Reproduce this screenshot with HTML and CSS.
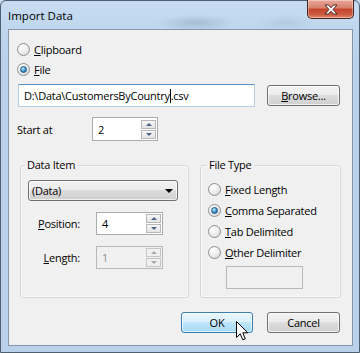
FILE: index.html
```html
<!DOCTYPE html>
<html>
<head>
<meta charset="utf-8">
<link rel="stylesheet" href="styles.css">
</head>
<body>
<div class="window">
  <div class="titlebar">
    <span class="title">Import Data</span>
    <div class="close">
      <svg width="14" height="11" viewBox="0 0 14 11"><path d="M1 1 H4.5 L7 3.8 L9.5 1 H13 L9 5.5 L13 10 H9.5 L7 7.2 L4.5 10 H1 L5 5.5 Z" fill="#fff" stroke="#4a2a24" stroke-width="1" stroke-linejoin="round"/></svg>
    </div>
  </div>
  <div class="client">
    <div class="radio-row"><span class="radio"></span><span class="lbl"><u>C</u>lipboard</span></div>
    <div class="radio-row"><span class="radio checked"></span><span class="lbl"><u>F</u>ile</span></div>
    <div class="file-row">
      <div class="textbox file-input">D:\Data\CustomersByCountry<span class="caret"></span>.csv</div>
      <div class="btn browse"><span><u>B</u>rowse...</span></div>
    </div>
    <div class="start-row">
      <span class="lbl start-lbl">Start at</span>
      <div class="spin start-spin">
        <span class="val">2</span>
        <div class="spin-btns"><span class="sb up"></span><span class="sb down"></span></div>
      </div>
    </div>
    <div class="groups">
      <fieldset class="group data-item">
        <legend>Data Item</legend>
        <div class="combo"><span>(Data)</span><span class="arrow"></span></div>
        <div class="field-row">
          <span class="flbl"><u>P</u>osition:</span>
          <div class="spin pos-spin">
            <span class="val">4</span>
            <div class="spin-btns"><span class="sb up"></span><span class="sb down"></span></div>
          </div>
        </div>
        <div class="field-row">
          <span class="flbl"><u>L</u>ength:</span>
          <div class="spin pos-spin disabled">
            <span class="val">1</span>
            <div class="spin-btns"><span class="sb up"></span><span class="sb down"></span></div>
          </div>
        </div>
      </fieldset>
      <fieldset class="group file-type">
        <legend>File Type</legend>
        <div class="radio-row ft"><span class="radio"></span><span class="lbl"><u>F</u>ixed Length</span></div>
        <div class="radio-row ft"><span class="radio checked"></span><span class="lbl"><u>C</u>omma Separated</span></div>
        <div class="radio-row ft"><span class="radio"></span><span class="lbl"><u>T</u>ab Delimited</span></div>
        <div class="radio-row ft"><span class="radio"></span><span class="lbl"><u>O</u>ther Delimiter</span></div>
        <div class="textbox delim"></div>
      </fieldset>
    </div>
    <div class="buttons">
      <div class="btn ok"><span>OK</span></div>
      <div class="btn cancel"><span>Cancel</span></div>
    </div>
  </div>
  <svg class="cursor" width="13" height="20" viewBox="0 0 13 20"><path d="M0.5 0.5 V16.5 L4.3 12.8 L6.8 18.8 L9.3 17.8 L6.8 11.8 H11.8 Z" fill="#fff" stroke="#000" stroke-width="1" stroke-linejoin="miter"/></svg>
</div>
</body>
</html>
```

FILE: styles.css
```css
html, body {
  margin: 0;
  padding: 0;
}
body {
  width: 360px;
  height: 353px;
  overflow: hidden;
  font-family: "Open Sans", "Noto Sans", "DejaVu Sans", sans-serif;
  font-size: 11px;
  letter-spacing: -0.25px;
  color: #000;
  background: #c8dcf0;
}
u { text-decoration: underline; text-underline-offset: 1px; }

.window {
  position: relative;
  width: 360px;
  height: 353px;
  box-sizing: border-box;
  border: 1px solid #4f5f70;
  border-radius: 6px 6px 0 0;
  background:
    radial-gradient(ellipse 40px 8px at 195px 22px, rgba(120,140,165,0.35), rgba(120,140,165,0) 100%),
    radial-gradient(ellipse 30px 8px at 285px 22px, rgba(140,160,185,0.25), rgba(140,160,185,0) 100%),
    linear-gradient(to bottom, #c7dcf1 0px, #bfd6ee 28px, #b9d1ea 60px, #b9d1ea 100%);
  display: flex;
  flex-direction: column;
}

.titlebar {
  height: 28px;
  display: flex;
  align-items: flex-start;
  justify-content: space-between;
}
.title {
  margin: 7px 0 0 7px;
  font-size: 11.5px;
  letter-spacing: 0;
  line-height: 16px;
  color: #000;
}
.close {
  width: 47px;
  height: 19px;
  margin: -1px 5px 0 0;
  box-sizing: border-box;
  border: 1px solid #4a2520;
  border-top: none;
  border-radius: 0 0 5px 5px;
  background: linear-gradient(to bottom, #e9a99b 0%, #d87f6c 45%, #c4432b 50%, #cc5a40 80%, #e08c70 100%);
  display: flex;
  align-items: center;
  justify-content: center;
  box-shadow: inset 0 0 0 1px rgba(255,255,255,0.35);
}

.client {
  margin-left: 7px;
  width: 345px;
  height: 317px;
  box-sizing: border-box;
  border: 1px solid #8696a7;
  background: #f0f0f0;
  padding: 9px 12px 0 8px;
  display: flex;
  flex-direction: column;
}

.radio-row {
  height: 20px;
  display: flex;
  align-items: center;
}
.radio {
  width: 13px;
  height: 13px;
  box-sizing: border-box;
  border-radius: 50%;
  border: 1px solid #8c8e90;
  background: radial-gradient(circle at 35% 30%, #ffffff 0%, #f2f2f2 40%, #d4d4d4 100%);
  margin-right: 4px;
  display: flex;
  align-items: center;
  justify-content: center;
  flex: none;
}
.radio.checked::after {
  content: "";
  width: 7px;
  height: 7px;
  box-sizing: border-box;
  border-radius: 50%;
  border: 1px solid #1f4f7e;
  background: radial-gradient(circle at 35% 30%, #c6f0ff 0%, #4ea6d8 45%, #195a93 100%);
}
.lbl {
  line-height: 15px;
}

.file-row {
  margin-top: 5px;
  height: 23px;
  display: flex;
  align-items: center;
}
.textbox {
  box-sizing: border-box;
  background: #fff;
  border: 1px solid #abadb3;
  border-color: #abadb3 #e2e3ea #e3e9ef #e2e3ea;
}
.file-input {
  margin-left: 1px;
  width: 237px;
  height: 23px;
  border-color: #5c93c7 #b5cfe7 #b5cfe7 #b5cfe7;
  padding-left: 5px;
  display: flex;
  align-items: center;
  white-space: pre;
}
.caret {
  display: inline-block;
  width: 1px;
  height: 14px;
  background: #000;
}

.btn {
  box-sizing: border-box;
  height: 21px;
  border: 1px solid #707070;
  border-radius: 3px;
  background: linear-gradient(to bottom, #f2f2f2 0%, #ebebeb 50%, #dddddd 50%, #cfcfcf 100%);
  box-shadow: inset 0 0 0 1px rgba(255,255,255,0.7);
  display: flex;
  align-items: center;
  justify-content: center;
  line-height: 15px;
}
.browse {
  width: 73px;
  margin-left: 12px;
}

.start-row {
  margin-top: 10px;
  height: 24px;
  display: flex;
  align-items: center;
}
.start-lbl {
  width: 75px;
}
.spin {
  box-sizing: border-box;
  height: 24px;
  border: 1px solid #acacac;
  background: #fff;
  display: flex;
  align-items: center;
  justify-content: space-between;
  padding: 0 1px 0 5px;
}
.start-spin {
  width: 66px;
}
.spin-btns {
  display: flex;
  flex-direction: column;
  gap: 1px;
}
.sb {
  width: 15px;
  height: 9px;
  box-sizing: border-box;
  border: 1px solid #b8b8b8;
  background: linear-gradient(to bottom, #f7f7f7, #e3e3e3);
  display: flex;
  align-items: center;
  justify-content: center;
}
.sb::after {
  content: "";
  width: 0;
  height: 0;
  border-left: 3px solid transparent;
  border-right: 3px solid transparent;
}
.sb.up::after { border-bottom: 3px solid #4c6385; }
.sb.down::after { border-top: 3px solid #4c6385; }

.groups {
  margin-top: 16px;
  margin-left: 3px;
  margin-right: -1px;
  display: flex;
  justify-content: space-between;
}
.group {
  margin: 0;
  height: 141px;
  box-sizing: border-box;
  border: 1px solid #d5d9dd;
  border-radius: 3px;
  padding: 7px 7px 0 7px;
  box-shadow: inset 0 0 0 1px rgba(255,255,255,0.6);
}
.group legend {
  padding: 0 2px;
  margin-left: -3px;
  line-height: 16px;
}
.file-type legend {
  margin-left: -1px;
}
.data-item { width: 169px; }
.file-type { width: 141px; }

.combo {
  width: 150px;
  height: 21px;
  box-sizing: border-box;
  border: 1px solid #707070;
  border-radius: 3px;
  background: linear-gradient(to bottom, #f2f2f2 0%, #ebebeb 50%, #dddddd 50%, #cfcfcf 100%);
  box-shadow: inset 0 0 0 1px rgba(255,255,255,0.7);
  display: flex;
  align-items: center;
  justify-content: space-between;
  padding: 0 4px 0 3px;
}
.combo .arrow {
  width: 0;
  height: 0;
  border-left: 4px solid transparent;
  border-right: 4px solid transparent;
  border-top: 4px solid #000;
}

.field-row {
  margin-top: 11px;
  height: 23px;
  display: flex;
  align-items: center;
}
.flbl {
  width: 52px;
  text-align: right;
  margin-right: 16px;
}
.pos-spin {
  width: 67px;
  height: 23px;
}
.spin.disabled {
  background: #f0f0f0;
  border-color: #b8b8b8;
  color: #8d8d8d;
}
.spin.disabled .sb {
  background: #f0f0f0;
  border-color: #c6c6c6;
}
.spin.disabled .sb.up::after { border-bottom-color: #a8a8a8; }
.spin.disabled .sb.down::after { border-top-color: #a8a8a8; }

.radio-row.ft {
  height: 21px;
}
.file-type .radio-row.ft:first-of-type {
  margin-top: -1px;
}
.delim {
  margin: 3px 0 0 18px;
  width: 77px;
  height: 23px;
  border: 1px solid #b8b8b8;
  background: #f0f0f0;
}

.buttons {
  margin-top: 14px;
  display: flex;
  justify-content: flex-end;
  gap: 14px;
}
.ok {
  width: 72px;
  border-color: #3c7fb1;
  background: linear-gradient(to bottom, #eaf6fd 0%, #d9f0fc 50%, #bee6fd 50%, #a7d9f5 100%);
  box-shadow: inset 0 0 0 1px rgba(255,255,255,0.6);
}
.cancel {
  width: 73px;
}

.cursor {
  position: absolute;
  left: 235px;
  top: 320px;
}
```
